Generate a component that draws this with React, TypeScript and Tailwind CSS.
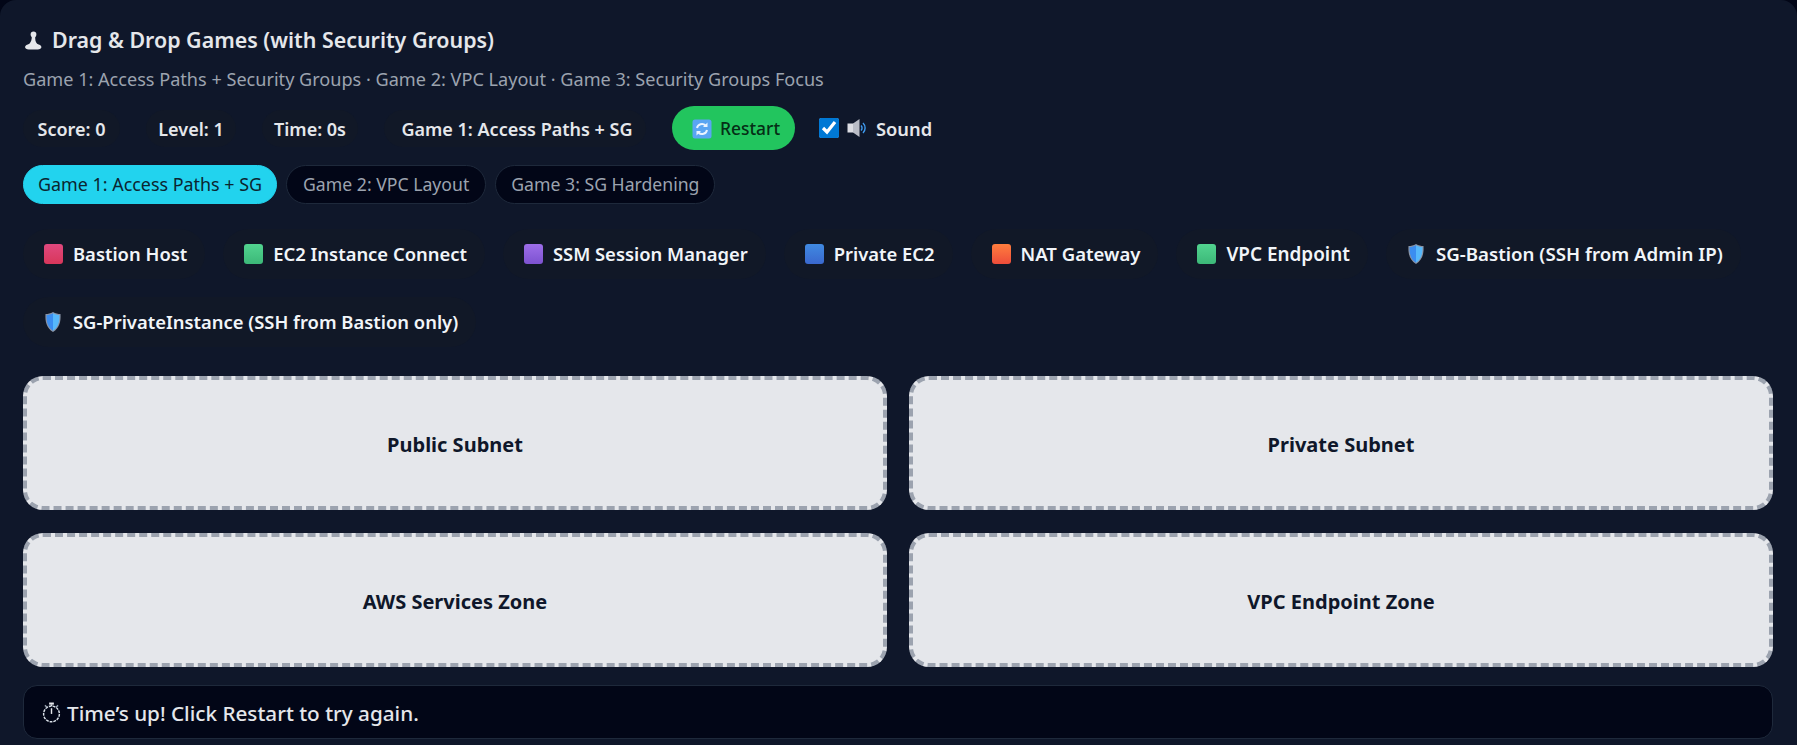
import type { ReactNode } from "react";

function Pawn() {
  return (
    <svg viewBox="0 0 18 18" className="h-[19px] w-[19px] shrink-0">
      <circle cx="9" cy="3.200" r="2.700" fill="#e5e7eb" />
      <path d="M7.400 5h3.200c0 3.500.2 5.500 1.800 7 2 .8 4.100 1.500 4.100 3.200 0 1.500-1.500 2.300-3.500 2.300H4.500C2.500 17.500 1 16.700 1 15.200c0-1.700 2.100-2.400 4.100-3.200 1.600-1.500 2.300-3.500 2.300-7z" fill="#e5e7eb" />
    </svg>
  );
}

function RefreshIcon() {
  return (
    <svg viewBox="0 0 20 20" className="h-5 w-5 shrink-0">
      <rect x="0.500" y="0.500" width="19" height="19" rx="2.500" fill="#5aa5f2" />
      <path d="M5 9a5 5 0 0 1 8.500-2.500" fill="none" stroke="#eaf4ff" strokeWidth="2" />
      <path d="M15.500 3.500v4.500h-4.500z" fill="#eaf4ff" />
      <path d="M15 11a5 5 0 0 1-8.500 2.500" fill="none" stroke="#eaf4ff" strokeWidth="2" />
      <path d="M4.500 16.500v-4.500h4.500z" fill="#eaf4ff" />
    </svg>
  );
}

function SpeakerIcon() {
  return (
    <svg viewBox="0 0 20 20" className="h-5 w-5 shrink-0">
      <rect x="0.500" y="5.500" width="6" height="9" fill="#dcdde3" />
      <path d="M6 5.500l6.500-4.500v18L6 14.500z" fill="#b9bcc6" />
      <path d="M14 7.500a3.500 3.500 0 0 1 0 5M16 5a7 7 0 0 1 0 10" fill="none" stroke="#3f9bf0" strokeWidth="1.400" />
    </svg>
  );
}

function ShieldIcon() {
  return (
    <svg viewBox="0 0 18 22" className="h-[22px] w-[18px] shrink-0">
      <path d="M9 1c2.500 1.400 5 2 7.500 2 .5 7.500-1 14-7.500 18C2.500 17 1 10.500 1.500 3 4 3 6.500 2.400 9 1z" fill="#8a94a6" />
      <path d="M9 2.200v17.600C3.700 16.200 2.300 10.500 2.600 4 4.800 3.900 7 3.300 9 2.200z" fill="#3b8df0" />
      <path d="M9 2.200v17.600c5.300-3.600 6.700-9.300 6.400-15.800-2.200-.1-4.400-.7-6.400-1.800z" fill="#56b8fb" />
    </svg>
  );
}

function StopwatchIcon() {
  return (
    <svg viewBox="0 0 20 22" className="h-[21px] w-[19px] shrink-0">
      <rect x="7.500" y="0.500" width="5" height="2.200" fill="#e5e7eb" />
      <rect x="9.200" y="2.500" width="1.600" height="2" fill="#e5e7eb" />
      <circle cx="10" cy="12.500" r="8.300" fill="#020617" stroke="#dbe2ea" strokeWidth="1.500" strokeDasharray="3 1" />
      <path d="M10 12.500V6.500" stroke="#e5e7eb" strokeWidth="1.500" />
      <path d="M3 3.500l2.500 2M17 3.500l-2.500 2" stroke="#9aa4b2" strokeWidth="1.500" />
    </svg>
  );
}

function Stat({ width, children }: { width: string; children: ReactNode }) {
  return (
    <div className={`flex h-[37px] items-center justify-center rounded-full bg-[#111827] pt-[2px] text-[18px] font-semibold text-[#e5e7eb] ${width}`}>
      {children}
    </div>
  );
}

function Chip({ icon, label, size = "text-[18.400px]", gap = "gap-[10px]" }: { icon: ReactNode; label: string; size?: string; gap?: string }) {
  return (
    <div className={`flex h-[50px] items-center rounded-[25px] bg-[#111827] pr-[18px] pl-[21px] font-semibold text-[#f1f5f9] ${size} ${gap}`}>
      {icon}
      {label}
    </div>
  );
}

function Square({ cls }: { cls: string }) {
  return <span className={`h-[20px] w-[19px] shrink-0 rounded-[3px] ${cls}`} />;
}

function Zone({ label }: { label: string }) {
  return (
    <div className="flex h-[134px] items-center justify-center rounded-[20px] border-[4px] border-dashed border-[#9ca3af] bg-[#e5e7eb] pt-[3px] text-[20px] font-bold text-[#0f172a]">
      {label}
    </div>
  );
}

export default function App() {
  return (
    <div className="h-[745px] overflow-hidden bg-[#020617] font-['Noto_Sans',sans-serif]">
      <div className="h-full rounded-t-[16px] bg-[#0f172a] pt-[25px] pr-6 pl-[23px]">
        <h2 className="flex items-center gap-[9px] pl-[1px] text-[21.400px] leading-[30px] font-semibold text-[#e5e7eb]">
          <Pawn />
          Drag &amp; Drop Games (with Security Groups)
        </h2>
        <p className="mt-[12px] text-[18.100px] leading-[24px] text-[#9ca3af]">
          Game 1: Access Paths + Security Groups · Game 2: VPC Layout · Game 3: Security Groups Focus
        </p>

        <div className="mt-[15px] flex h-[44px] items-center gap-[26px]">
          <Stat width="w-[97px]">Score: 0</Stat>
          <Stat width="w-[90px]">Level: 1</Stat>
          <Stat width="w-[96px]">Time: 0s</Stat>
          <Stat width="w-[262px] pl-[4px]">Game 1: Access Paths + SG</Stat>
          <button className="flex h-[44px] w-[123px] items-center gap-[8px] rounded-full bg-[#22c55e] px-[20px] pt-[1px] text-[17.400px] font-medium text-[#052e16]">
            <RefreshIcon />
            Restart
          </button>
          <label className="-ml-[2px] flex items-center gap-[8px] text-[18.300px] font-semibold text-[#e5e7eb]">
            <input type="checkbox" defaultChecked className="h-5 w-5 accent-[#0078d4]" />
            <SpeakerIcon />
            <span className="pl-[1px] pt-[2px]">Sound</span>
          </label>
        </div>

        <div className="mt-[15px] flex items-center gap-[9px]">
          <button className="h-[39px] rounded-full border border-[#22d3ee] bg-[#22d3ee] px-[14px] text-[17.900px] text-[#0b2530]">Game 1: Access Paths + SG</button>
          <button className="h-[39px] rounded-full border border-[#1e293b] bg-[#020617] px-[16px] text-[17.650px] text-[#9ca3af]">Game 2: VPC Layout</button>
          <button className="h-[39px] rounded-full border border-[#1e293b] bg-[#020617] px-[15px] text-[17.650px] text-[#9ca3af]">Game 3: SG Hardening</button>
        </div>

        <div className="mt-[25px] flex flex-wrap gap-[18px]">
          <Chip icon={<Square cls="bg-gradient-to-b from-[#e0487e] to-[#d8365a]" />} label="Bastion Host" />
          <Chip icon={<Square cls="bg-gradient-to-b from-[#52d490] to-[#3cb878]" />} label="EC2 Instance Connect" />
          <Chip icon={<Square cls="bg-gradient-to-b from-[#9d6ee9] to-[#7d52d0]" />} label="SSM Session Manager" />
          <Chip icon={<Square cls="bg-gradient-to-b from-[#408ae2] to-[#3a68ce]" />} label="Private EC2" />
          <Chip icon={<Square cls="bg-gradient-to-b from-[#ff7d3e] to-[#ee4c3a]" />} label="NAT Gateway" size="text-[18.550px]" />
          <Chip icon={<Square cls="bg-gradient-to-b from-[#52d490] to-[#3cb878]" />} label="VPC Endpoint" size="text-[18.900px]" />
          <Chip icon={<ShieldIcon />} label="SG-Bastion (SSH from Admin IP)" size="text-[18.700px]" gap="gap-[11px]" />
          <Chip icon={<ShieldIcon />} label="SG-PrivateInstance (SSH from Bastion only)" gap="gap-[11px]" />
        </div>

        <div className="mt-[29px] grid grid-cols-2 gap-x-[22px] gap-y-[23px]">
          <Zone label="Public Subnet" />
          <Zone label="Private Subnet" />
          <Zone label="AWS Services Zone" />
          <Zone label="VPC Endpoint Zone" />
        </div>

        <div className="mt-[18px] flex h-[54px] items-center gap-[6px] rounded-[14px] border border-[#1e293b] bg-[#020617] px-[18px] text-[20.700px] font-medium text-[#e5e7eb]">
          <StopwatchIcon />
          <span className="pt-[3px]">Time’s up! Click Restart to try again.</span>
        </div>
      </div>
    </div>
  );
}
